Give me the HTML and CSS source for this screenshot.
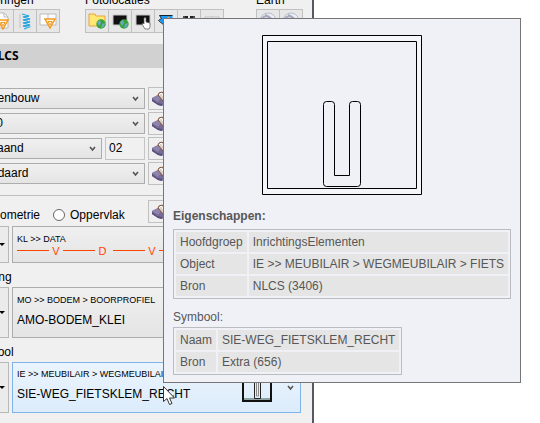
FILE: index.html
```html
<!DOCTYPE html>
<html lang="nl">
<head>
<meta charset="utf-8">
<title>NLCS</title>
<link rel="stylesheet" href="styles.css">
</head>
<body>
<svg class="defs" aria-hidden="true">
  <symbol id="eraser" viewBox="0 0 16 16">
    <path d="M1 7l6-3 6 1 2 7-4 3-4-1-6-4z" fill="#776b98"/>
    <path d="M1 7l6-3 3 3-3 4z" fill="#8f84ab"/>
    <path d="M1 10l6 4 4 1v-2l-5-1-5-4z" fill="#5a4d7d"/>
    <path d="M7 4l1-2 3-1 4 3v5l-3 1z" fill="#d9cfc6" stroke="#80513c"/>
    <path d="M8 4l2-2 3 4" fill="none" stroke="#fff"/>
  </symbol>
  <symbol id="chevron" viewBox="0 0 7 6">
    <path d="M1 1l2.500 3L6 1" fill="none" stroke="#555" stroke-width="1.600"/>
  </symbol>
  <symbol id="triangle" viewBox="0 0 12 11">
    <path d="M1 1h10L6 10z" fill="#fff8e8" stroke="#f39a20" stroke-width="1.500"/>
    <path d="M4 3.500h4L6 7z" fill="none" stroke="#f39a20"/>
  </symbol>
  <symbol id="globe" viewBox="0 0 10 10">
    <circle cx="5" cy="5" r="4.700" fill="#36a536"/>
    <path d="M1 3l3-2 1 3-2 3zM6 5l3-1-1 4-3 1z" fill="#6aa7c4"/>
  </symbol>
  <symbol id="ball" viewBox="0 0 18 18">
    <circle cx="9" cy="9" r="8" fill="#eceef4" stroke="#b9bcc9"/>
    <path d="M3 6q7-5 12 5M6 3q8 2 8 12" fill="none" stroke="#a4a9bd" stroke-width="2"/>
  </symbol>
</svg>

<main class="panel">
  <div class="toolbar">
    <section class="group">
      <h2 class="label">Markeringen</h2>
      <div class="tools">
        <button class="tool" aria-label="Lijn"></button>
        <button class="tool" aria-label="Document"><svg viewBox="0 0 18 18"><path d="M3 1h8l4 4v11H3z" fill="#fff" stroke="#bbb"/><path d="M11 1v4h4" fill="none" stroke="#bbb"/><use href="#triangle" x="4" y="7" width="12" height="11"/></svg></button>
        <button class="tool" aria-label="Veer"><svg viewBox="0 0 18 18"><path d="M4 2v14" stroke="#d5d5d5" stroke-width="2"/><path d="M6 2l7 2-6 1 7 2-7 1 7 2-7 1 7 2-7 1 6 1-5 2" fill="none" stroke="#28a6df" stroke-width="1.300"/></svg></button>
        <button class="tool" aria-label="Blad"><svg viewBox="0 0 18 18"><path d="M1 2h16v11H1zM9 2v11" fill="#fff" stroke="#bbb"/><use href="#triangle" x="5" y="6" width="12" height="11"/></svg></button>
      </div>
    </section>
    <section class="group">
      <h2 class="label">Fotolocaties</h2>
      <div class="tools">
        <button class="tool" aria-label="Map"><svg viewBox="0 0 18 18"><path d="M1 14V2h6l1 2h9v10z" fill="#ffe873" stroke="#e8a33d"/><use href="#globe" x="8" y="7" width="10" height="10"/></svg></button>
        <button class="tool" aria-label="Foto op kaart"><svg viewBox="0 0 18 18"><path d="M2 3h14v10H2z" fill="#111" stroke="#c5c5c5"/><use href="#globe" x="8" y="7" width="10" height="10"/></svg></button>
        <button class="tool" aria-label="Foto kiezen"><svg viewBox="0 0 18 18"><path d="M2 3h14v10H2z" fill="#111" stroke="#c5c5c5"/><path d="M10 12V6q1-1 2 0v4l4 1v4l-1 2h-4l-3-5 1-1z" fill="#fff" stroke="#555" stroke-width=".7"/></svg></button>
        <button class="tool" aria-label="Richting"><svg viewBox="0 0 18 18"><path d="M2.500 3.500h13v10h-3l-5 4v-4l-5-5 2-2z" fill="#169bff"/><path d="M7.500 17.500v-4l-6-5 3-2-2-3h13" fill="none" stroke="#123"/><path d="M11 5l2 3" stroke="#f59a45" stroke-width="2"/></svg></button>
        <button class="tool" aria-label="Zoeken"><svg viewBox="0 0 18 18"><path d="M3 4h5v8H3zM10 4h5v8h-5z" fill="#222"/><path d="M4 4v4M14 4v4" stroke="#777"/></svg></button>
        <button class="tool" aria-label="Boek"><svg viewBox="0 0 18 18"><path d="M2 5h14v9H2zM9 5v9" fill="#fff" stroke="#bbb"/></svg></button>
      </div>
    </section>
    <section class="group">
      <h2 class="label">Earth</h2>
      <div class="tools">
        <button class="tool" aria-label="Earth openen"><svg viewBox="0 0 18 18"><use href="#ball" width="18" height="18"/></svg></button>
        <button class="tool" aria-label="Earth sluiten"><svg viewBox="0 0 18 18"><use href="#ball" width="18" height="18"/></svg></button>
      </div>
    </section>
  </div>

  <h1 class="bar">NLCS</h1>

  <form class="form">
    <div class="fields">
      <div class="field">
        <div class="pick"><select aria-label="Discipline"><option>Wegenbouw</option></select><svg><use href="#chevron"/></svg></div>
        <button type="button" class="erase" aria-label="Wissen"><svg><use href="#eraser"/></svg></button>
      </div>
      <div class="field">
        <div class="pick"><select aria-label="Schaal"><option>1:500</option></select><svg><use href="#chevron"/></svg></div>
        <button type="button" class="erase" aria-label="Wissen"><svg><use href="#eraser"/></svg></button>
      </div>
      <div class="field">
        <div class="pair">
          <div class="pick"><select aria-label="Status"><option>Bestaand</option></select><svg><use href="#chevron"/></svg></div>
          <input class="number" type="text" value="02" aria-label="Nummer">
        </div>
        <button type="button" class="erase" aria-label="Wissen"><svg><use href="#eraser"/></svg></button>
      </div>
      <div class="field">
        <div class="pick"><select aria-label="Stijl"><option>Standaard</option></select><svg><use href="#chevron"/></svg></div>
        <button type="button" class="erase" aria-label="Wissen"><svg><use href="#eraser"/></svg></button>
      </div>
    </div>

    <div class="field kinds">
      <div class="radios">
        <label><input type="radio" name="kind">Geometrie</label>
        <label><input type="radio" name="kind">Oppervlak</label>
      </div>
      <button type="button" class="erase" aria-label="Wissen"><svg><use href="#eraser"/></svg></button>
    </div>

    <div class="choice">
      <button type="button" class="menu" aria-label="Lijnen"></button>
      <button type="button" class="card">
        <span class="path">KL &gt;&gt; DATA</span>
        <span class="linetype"><i></i><b>V</b><i></i><b class="wide">D</b><i></i><b>V</b><i></i></span>
      </button>
    </div>

    <h2 class="label caption">Arcering</h2>
    <div class="choice">
      <button type="button" class="menu" aria-label="Arceringen"></button>
      <button type="button" class="card tall">
        <span class="path">MO &gt;&gt; BODEM &gt; BOORPROFIEL</span>
        <span class="name">AMO-BODEM_KLEI</span>
      </button>
    </div>

    <h2 class="label caption">Symbool</h2>
    <div class="choice">
      <button type="button" class="menu" aria-label="Symbolen"></button>
      <button type="button" class="card tall active">
        <span class="texts">
          <span class="path">IE &gt;&gt; MEUBILAIR &gt; WEGMEUBILAIR</span>
          <span class="name">SIE-WEG_FIETSKLEM_RECHT</span>
        </span>
        <svg class="thumb" viewBox="0 0 30 30"><path d="M1 1h28v28H1z" fill="none" stroke="#111" stroke-width="2"/><path d="M2 27h26" stroke="#8fa3a5" stroke-width="2"/><path d="M12.500 10v16.500h6V10" fill="none" stroke="#222"/><path d="M14.500 10v14h2V10" fill="none" stroke="#888"/></svg>
        <svg class="arrow"><use href="#chevron"/></svg>
      </button>
    </div>
  </form>
</main>

<aside class="tooltip" role="tooltip">
  <svg class="preview" viewBox="0 0 160 160" fill="none" stroke="#000">
    <path d="M.5.500h159v159H.5z" stroke="none" fill="#f5f6f9"/>
    <path d="M.5.500h159v159H.5z"/>
    <path d="M5.500 6.500h149v147H5.500z" fill="#f0f1f7"/>
    <path d="M61.500 69.500q0-3 3-3h5q3 0 3 3v71h15v-71q0-3 3-3h5q3 0 3 3v79q0 3-3 3h-31q-3 0-3-3z"/>
  </svg>
  <h3 class="title">Eigenschappen:</h3>
  <table>
    <tr><td>Hoofdgroep</td><td>InrichtingsElementen</td></tr>
    <tr><td>Object</td><td>IE &gt;&gt; MEUBILAIR &gt; WEGMEUBILAIR &gt; FIETS</td></tr>
    <tr><td>Bron</td><td>NLCS (3406)</td></tr>
  </table>
  <p class="subtitle">Symbool:</p>
  <table>
    <tr><td>Naam</td><td>SIE-WEG_FIETSKLEM_RECHT</td></tr>
    <tr><td>Bron</td><td>Extra (656)</td></tr>
  </table>
</aside>

<svg class="cursor" viewBox="0 0 12 19" aria-hidden="true"><path d="M.5.500v15l3.500-3 2.500 6 2.500-1-2.500-5.500h5z" fill="#fff" stroke="#333"/></svg>
</body>
</html>
```
FILE: styles.css
```css
* { box-sizing: border-box; }

body {
  margin: 0;
  background: #fff;
  color: #000;
  font: 12px/14px "Liberation Sans", Arial, sans-serif;
  overflow: hidden;
}

button, select, input { font: inherit; color: inherit; margin: 0; padding: 0; }
svg { display: block; }
.defs { display: none; }

/* The panel is scrolled a little to the right and down. */
.panel {
  width: 347px;
  min-height: calc(100vh + 7px);
  margin: -7px 0 0 -33px;
  background: #f0f0f0;
  border-right: 2px solid #555a60;
}

.label { margin: 0; font-size: 12px; font-weight: normal; line-height: 14px; }

.toolbar { display: flex; gap: 25px; }
.group { display: flex; flex-direction: column; gap: 2px; }
.group + .group + .group { margin-left: 7px; }
.tools { display: flex; }
.tool {
  width: 24px;
  height: 24px;
  padding: 2px;
  border: 1px solid #c0c0c0;
  background: #e7e7e7;
}
.tool + .tool { margin-left: -1px; }

.bar {
  margin: 11px 0 0;
  padding-left: 21px;
  background: #d1d1d1;
  font: bold 12px/24px "Noto Sans", sans-serif;
}

.form { padding-right: 11px; }
.fields {
  display: flex;
  flex-direction: column;
  gap: 2px;
  padding: 19px 0 10px;
}
.field {
  display: grid;
  grid-template-columns: 178px 23px;
  gap: 3px;
  align-items: center;
}
.pair { display: flex; gap: 3px; }
.pick { display: flex; align-items: center; flex: 1; }
.pick select {
  appearance: none;
  flex: 1;
  min-width: 0;
  height: 21px;
  padding: 0 22px 2px 5px;
  border: 1px solid #adadad;
  border-radius: 0;
  background: linear-gradient(#f0f0f0, #e4e4e4);
}
.pick svg { width: 7px; height: 6px; margin: 0 6px 0 -13px; }
.number {
  width: 40px;
  height: 23px;
  padding: 0 0 2px 3px;
  border: 1px solid #c4c4c4;
  background: #f0f0f0;
}
.erase {
  width: 23px;
  height: 23px;
  padding: 3px 2px;
  border: 1px solid #c0c0c0;
  background: #efefef;
}
.erase svg { width: 16px; height: 16px; }

.kinds { padding: 4px 0 3px; margin-right: -11px; border-top: 1px solid #c0c0c0; }
.radios { display: flex; gap: 13px; padding-top: 6px; }
.radios label { display: flex; align-items: center; gap: 5px; }
.radios input {
  appearance: none;
  width: 12px;
  height: 12px;
  border: 1px solid #666;
  border-radius: 50%;
  background: #fff;
}

.caption { padding: 7px 0 3px; line-height: 14px; }
.choice { display: flex; gap: 3px; }
.menu {
  display: flex;
  align-items: center;
  justify-content: flex-end;
  width: 42px;
  padding-right: 3px;
  border: 1px solid #b8b8b8;
  background: #ebebeb;
}
.menu::after {
  content: "";
  border: 3px solid transparent;
  border-top-color: #000;
  border-bottom: 0;
}
.card {
  flex: 1;
  min-width: 0;
  height: 37px;
  padding: 4px;
  border: 1px solid #adadad;
  background: linear-gradient(#f0f0f0, #e4e4e4);
  text-align: left;
  white-space: nowrap;
  overflow: hidden;
}
.tall { height: 51px; }
.active {
  display: flex;
  border-color: #7eb4ea;
  background: linear-gradient(#ebf4fc, #dcecfc);
}
.path { display: block; font-size: 9px; line-height: 14px; }
.name { display: block; padding: 6px 0; }
.card:not(.active) { padding-bottom: 6px; }
.tall:not(.active) { padding-bottom: 4px; }
.texts { flex: 1; min-width: 0; }
.thumb { width: 30px; height: 30px; align-self: flex-end; margin: 0 15px 6px 0; }
.arrow { width: 7px; height: 6px; align-self: center; margin-right: 2px; }

.linetype { display: flex; align-items: center; height: 10px; color: #ff4500; font-size: 11px; line-height: 10px; }
.linetype i { flex: none; width: 32px; height: 1px; background: #ff4500; }
.linetype b { flex: none; width: 14px; font-weight: normal; text-align: center; }
.linetype .wide { width: 18px; padding-right: 3px; }

.tooltip {
  position: absolute;
  left: 163px;
  top: 18px;
  padding: 16px 9px 7px;
  border: 1px solid #767676;
  background: #f0f1f7;
  color: #575757;
}
.preview { width: 160px; height: 160px; margin: 0 auto; }
.title { margin: 14px 0 6px; font-size: 12px; line-height: 14px; }
.subtitle { margin: 11px 0 3px; }
table {
  border: 1px solid #bbbcc0;
  border-spacing: 2px;
}
td { height: 20px; padding: 0 4px; background: #e5e5e5; white-space: nowrap; }

.cursor { position: absolute; left: 163px; top: 386px; width: 12px; height: 19px; }
```
